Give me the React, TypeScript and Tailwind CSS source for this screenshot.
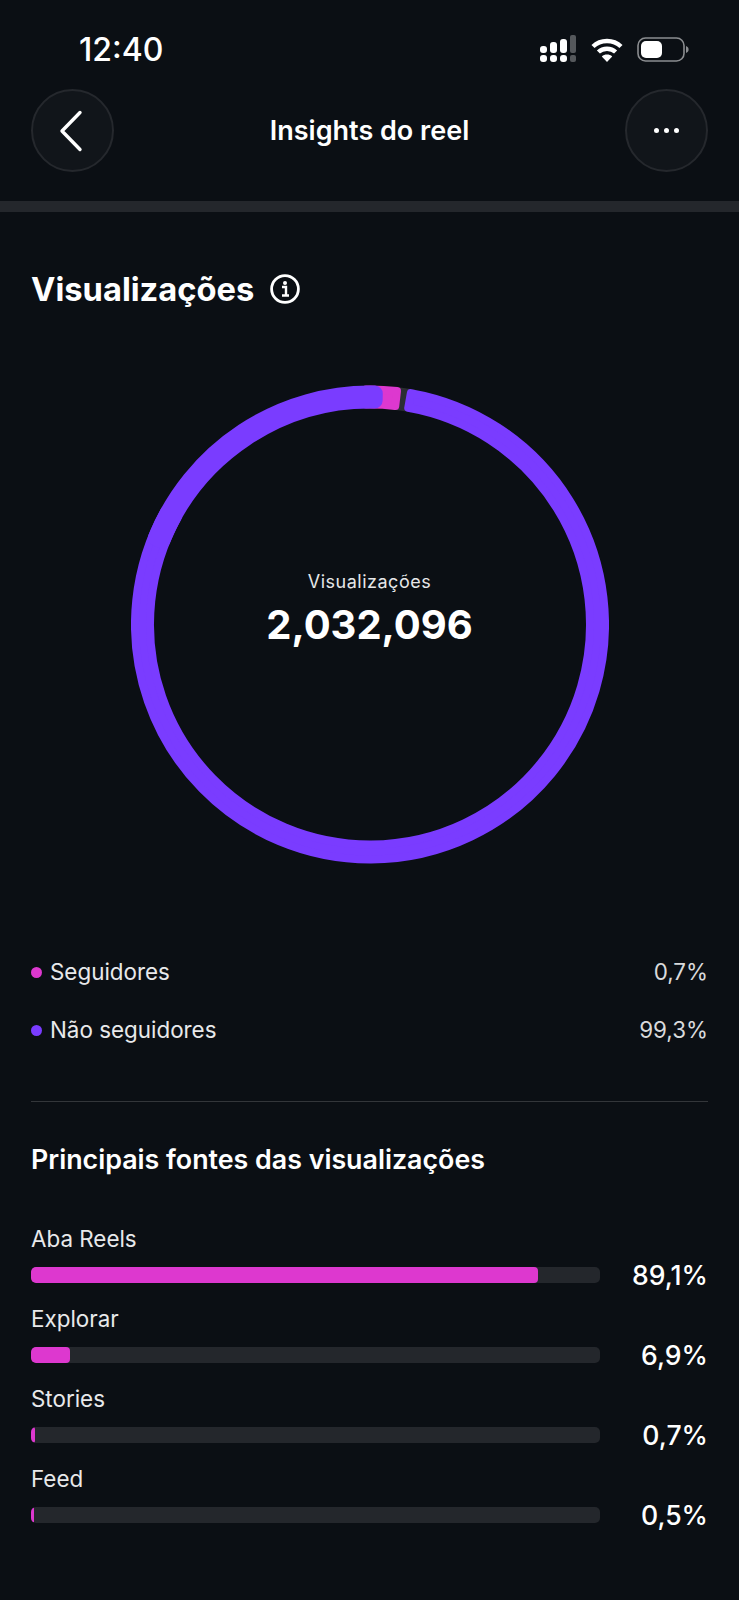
import React from 'react';

const FONT = 'font-["Inter","Roboto",sans-serif]';

const SOURCES = [
  { label: 'Aba Reels', value: '89,1%', fill: 'w-[507px]' },
  { label: 'Explorar', value: '6,9%', fill: 'w-[39px]' },
  { label: 'Stories', value: '0,7%', fill: 'w-[4px]' },
  { label: 'Feed', value: '0,5%', fill: 'w-[3px]' },
];

const CX = 239;
const CY = 239.5;
const R_OUT = 239;
const R_IN = 216;

const polar = (r: number, deg: number) => {
  const a = (deg * Math.PI) / 180;
  return `${(CX + r * Math.sin(a)).toFixed(2)} ${(CY - r * Math.cos(a)).toFixed(2)}`;
};

// ring segment with softly rounded corners (fill + round-joined stroke)
const Segment = ({ from, to, color, corner }: { from: number; to: number; color: string; corner: number }) => {
  const outer = R_OUT - corner;
  const inner = R_IN + corner;
  const pad = (corner / 227.5) * (180 / Math.PI);
  const a0 = from + pad;
  const a1 = to - pad;
  const large = a1 - a0 > 180 ? 1 : 0;
  const d = `M${polar(outer, a0)}A${outer} ${outer} 0 ${large} 1 ${polar(outer, a1)}L${polar(inner, a1)}A${inner} ${inner} 0 ${large} 0 ${polar(inner, a0)}Z`;
  return <path d={d} fill={color} stroke={color} strokeWidth={corner * 2} strokeLinejoin="round" />;
};

const StatusIcons = () => (
  <div className="flex items-center gap-[14px]">
    <svg width="38" height="28" viewBox="0 0 38 28" fill="#fff">
      <rect x="1" y="11" width="7" height="7" rx="3" />
      <rect x="1" y="20" width="7" height="7" rx="3" />
      <rect x="11" y="7" width="7" height="11" rx="3" />
      <rect x="11" y="20" width="7" height="7" rx="3" />
      <rect x="21" y="4" width="7" height="14" rx="3" />
      <rect x="21" y="20" width="7" height="7" rx="3" />
      <rect x="31" y="0" width="6" height="18" rx="2" fill="#55585c" />
      <rect x="31" y="20" width="6" height="7" rx="2" fill="#55585c" />
    </svg>
    <svg width="32" height="25" viewBox="0 0 32 25" fill="none" stroke="#fff" strokeWidth="4.4">
      <path d="M2 9.5C9.5 2.2 22.5 2.2 30 9.5" />
      <path d="M7.4 15C12 10.6 20 10.6 24.6 15" />
      <path d="M16 25l-5.2-5.600c2.800-2.400 7.600-2.400 10.400 0z" fill="#fff" stroke="none" />
    </svg>
    <svg width="52" height="25" viewBox="0 0 52 25" fill="none">
      <rect x="1" y="1" width="46" height="23" rx="7.5" stroke="#8b8d90" strokeWidth="1.6" />
      <rect x="4" y="4" width="21" height="17" rx="5" fill="#fff" />
      <path d="M49 9c2 .8 2.600 2 2.600 3.500S51 15.200 49 16z" fill="#8b8d90" />
    </svg>
  </div>
);

const Donut = () => (
  <div className="relative w-[478px] h-[479px]">
    <svg width="478" height="479" viewBox="0 0 478 479" fill="none" className="block">
      <Segment from={6} to={11} color="#2c2e33" corner={1} />
      <Segment from={-2} to={7.6} color="#dd38cf" corner={4} />
      <Segment from={9} to={300} color="#7a3cff" corner={4} />
      <Segment from={290} to={363.2} color="#7a3cff" corner={8} />
    </svg>
    <div className="absolute inset-0 flex flex-col items-center justify-center pb-[30px]">
      <p className="text-[18px] leading-[24px] text-[#e6e7e9] tracking-[0.5px]">Visualizações</p>
      <p className="mt-[6px] text-[40px] leading-[50px] font-bold text-white">2,032,096</p>
    </div>
  </div>
);

export default function App() {
  return (
    <div className={`w-[739px] h-[1600px] overflow-hidden bg-[#0b0f14] text-white ${FONT}`}>
      {/* Status bar */}
      <div className="h-[89px] pl-[79px] pr-[50px] pt-[30px] flex items-start justify-between">
        <span className="text-[32px] leading-[40px] font-medium">12:40</span>
        <div className="pt-[5px]">
          <StatusIcons />
        </div>
      </div>

      {/* Header */}
      <div className="h-[83px] px-[31px] flex items-center justify-between">
        <button className="w-[83px] h-[83px] rounded-full bg-[#11151a] border-2 border-[#25282d] flex items-center justify-center pr-[4px]">
          <svg width="24" height="42" viewBox="0 0 24 42" fill="none" stroke="#fff" strokeWidth="3.4" strokeLinecap="round" strokeLinejoin="round">
            <path d="M21 2.500L3 21l18 18.500" />
          </svg>
        </button>
        <h1 className="text-[27px] leading-[32px] font-semibold">Insights do reel</h1>
        <button className="w-[83px] h-[83px] rounded-full bg-[#11151a] border-2 border-[#25282d] flex items-center justify-center gap-[5px]">
          <span className="w-[5px] h-[5px] rounded-full bg-white" />
          <span className="w-[5px] h-[5px] rounded-full bg-white" />
          <span className="w-[5px] h-[5px] rounded-full bg-white" />
        </button>
      </div>

      <div className="mt-[29px] h-[11px] bg-[#24272c]" />

      {/* Views */}
      <div className="px-[31px]">
        <div className="mt-[57px] h-[40px] flex items-center gap-[16px]">
          <h2 className="text-[32.7px] leading-[40px] font-bold">Visualizações</h2>
          <svg width="30" height="30" viewBox="0 0 30 30" fill="none">
            <circle cx="15" cy="15" r="13.400" stroke="#fff" strokeWidth="2.800" />
            <circle cx="15" cy="9" r="2" fill="#fff" />
            <path d="M12 13h4v8M12 21.500h7" stroke="#fff" strokeWidth="2.400" />
          </svg>
        </div>

        <div className="mt-[76px] flex justify-center">
          <Donut />
        </div>

        {/* Legend */}
        <div className="mt-[94px] flex flex-col gap-[30px] text-[22.4px] leading-[28px]">
          <div className="flex items-center justify-between">
            <div className="flex items-center gap-[8px]">
              <span className="w-[11px] h-[11px] rounded-full bg-[#dd38cf]" />
              <span className="text-[#e8e9eb]">Seguidores</span>
            </div>
            <span className="text-[#d9dadc]">0,7%</span>
          </div>
          <div className="flex items-center justify-between">
            <div className="flex items-center gap-[8px]">
              <span className="w-[11px] h-[11px] rounded-full bg-[#7a3cff]" />
              <span className="text-[#e8e9eb]">Não seguidores</span>
            </div>
            <span className="text-[#d9dadc]">99,3%</span>
          </div>
        </div>

        <div className="mt-[57px] h-[1px] bg-[#33363a]" />

        <h3 className="mt-[41px] text-[26.8px] leading-[32px] font-semibold">Principais fontes das visualizações</h3>

        {/* Sources */}
        <div className="mt-[50px] flex flex-col gap-[6px]">
          {SOURCES.map((s) => (
            <div key={s.label} className="h-[74px]">
              <p className="text-[22.4px] leading-[28px] text-[#e8e9eb]">{s.label}</p>
              <div className="mt-[6px] flex items-center justify-between">
                <div className="w-[569px] h-[16px] rounded-[5px] bg-[#24272c] overflow-hidden">
                  <div className={`h-full rounded-[4px] bg-[#dd38cf] ${s.fill}`} />
                </div>
                <span className="text-[26.6px] leading-[32px] font-medium">{s.value}</span>
              </div>
            </div>
          ))}
        </div>
      </div>
    </div>
  );
}
